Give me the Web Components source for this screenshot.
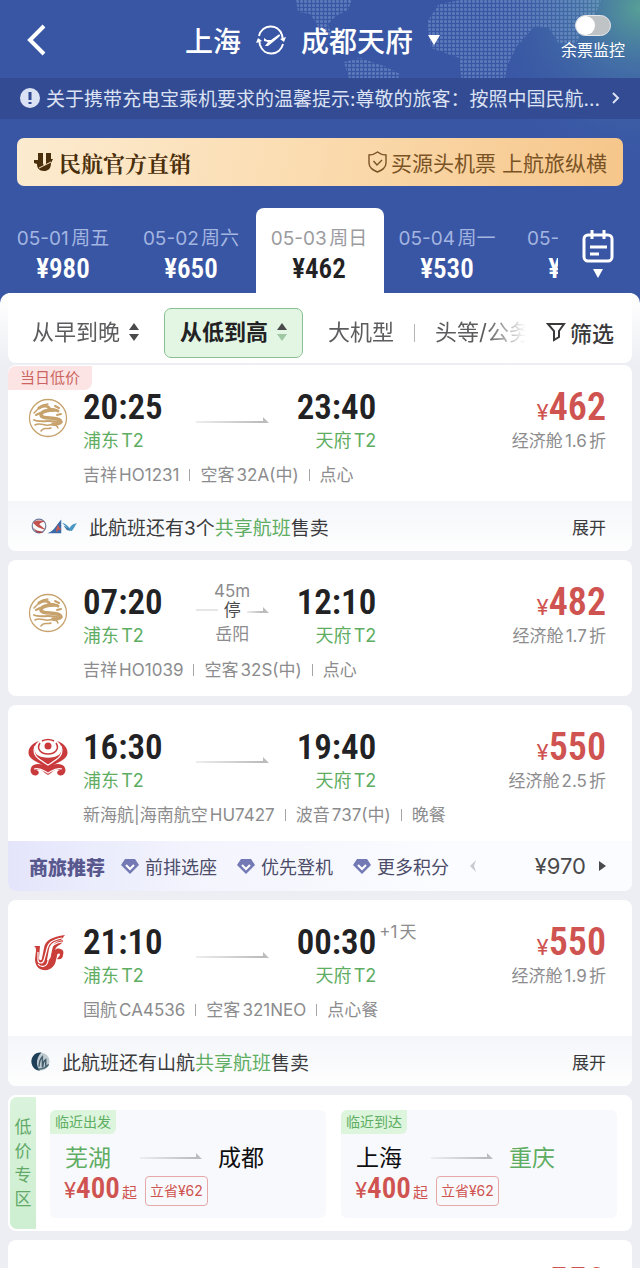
<!DOCTYPE html>
<html lang="zh-CN">
<head>
<meta charset="utf-8">
<meta name="viewport" content="width=device-width, initial-scale=1">
<title>上海 - 成都天府</title>
<style>
  html, body {
    margin: 0;
    height: 100%;
  }
  body {
    --sans: Inter, "Noto Sans CJK SC", sans-serif;
    --digits: "Roboto Condensed", "Liberation Sans Narrow", Roboto, sans-serif;
    --blue: #3956a5;
    --green: #5ead62;
    --red: #cf5350;
    --grey: #8c8c8e;
    --ink: #222224;
    background: #eceef3;
    color: var(--ink);
    font-family: var(--sans);
    text-autospace: normal;
    overflow: hidden;
  }
</style>
</head>
<body>
<flight-app>
  <search-header slot="top" from="上海" to="成都天府"></search-header>
  <notice-bar slot="top">关于携带充电宝乘机要求的温馨提示:尊敬的旅客：按照中国民航...</notice-bar>
  <promo-banner slot="top">民航官方直销<span slot="slogan">买源头机票 上航旅纵横</span></promo-banner>
  <date-tabs slot="top"></date-tabs>

  <filter-bar></filter-bar>

  <flight-card badge="当日低价" airline="juneyao" depart="20:25" arrive="23:40" price="462"
    cabin="经济舱1.6折" info="吉祥HO1231,空客32A(中),点心">
    <share-bar slot="footer">
      <airline-logo slot="icon" name="eastern" size="16"></airline-logo>
      <airline-logo slot="icon" name="southern" size="15"></airline-logo>
      <airline-logo slot="icon" name="xiamen" size="15"></airline-logo>
      此航班还有3个<b>共享航班</b>售卖
    </share-bar>
  </flight-card>

  <flight-card airline="juneyao" depart="07:20" arrive="12:10" price="482" stop="岳阳" wait="45m"
    cabin="经济舱1.7折" info="吉祥HO1039,空客32S(中),点心"></flight-card>

  <flight-card airline="hainan" depart="16:30" arrive="19:40" price="550"
    cabin="经济舱2.5折" info="新海航|海南航空HU7427,波音737(中),晚餐">
    <business-bar slot="footer" price="970"></business-bar>
  </flight-card>

  <flight-card airline="airchina" depart="21:10" arrive="00:30" next-day="+1天" price="550"
    cabin="经济舱1.9折" info="国航CA4536,空客321NEO,点心餐">
    <share-bar slot="footer">
      <airline-logo slot="icon" name="shandong" size="19"></airline-logo>
      此航班还有山航<b>共享航班</b>售卖
    </share-bar>
  </flight-card>

  <low-price-zone>
    <nearby-deal label="临近出发" from="芜湖" to="成都" near="from" price="400" save="62"></nearby-deal>
    <nearby-deal label="临近到达" from="上海" to="重庆" near="to" price="400" save="62"></nearby-deal>
  </low-price-zone>

  <flight-card airline="airchina" depart="20:30" arrive="23:55" price="550"
    cabin="经济舱1.9折" info="国航CA4516,空客321NEO,点心餐"></flight-card>
</flight-app>

<script>
// small helper so every component does not repeat the attach + clone part
class BaseElement extends HTMLElement {
  constructor() {
    super();
    this.attachShadow({ mode: "open" });
  }

  connectedCallback() {
    const template = document.createElement("template");
    template.innerHTML = `
      <style>
        :host, * { box-sizing: border-box; }
        button {
          all: unset;
          box-sizing: border-box;
          cursor: pointer;
        }
        a { color: inherit; text-decoration: none; }
        svg { display: block; flex: none; }
      </style>
      ${this.render()}
    `;
    this.shadowRoot.replaceChildren(template.content.cloneNode(true));
  }

  attr(name) {
    return this.getAttribute(name) || "";
  }
}

class FlightApp extends BaseElement {
  render() {
    return `
      <style>
        :host {
          display: flex;
          flex-direction: column;
          height: 100vh;
        }
        header {
          position: relative;
          flex: none;
          background: var(--blue);
        }
        /* glow and dotted map lie under the whole header */
        .map {
          position: absolute;
          top: 0;
          right: 0;
          z-index: 0;
        }
        .content { position: relative; z-index: 1; }
        .body {
          flex: 1;
          min-height: 0;
          background: var(--blue);
        }
        main {
          display: flex;
          flex-direction: column;
          gap: 9px;
          height: 100%;
          padding: 0 8px;
          overflow: hidden;
          border-radius: 10px 10px 0 0;
          background: linear-gradient(#fff, #fcfcfd 16px, #eceef3 72px);
        }
      </style>
      <header>
        <svg class="map" width="640" height="160" viewBox="0 0 640 160">
          <defs>
            <pattern id="dots" width="4" height="4" patternUnits="userSpaceOnUse">
              <rect width="3" height="3" rx="1" fill="#a9c6ea"/>
            </pattern>
            <radialGradient id="glow" gradientUnits="userSpaceOnUse" cx="640" cy="8" r="170">
              <stop offset="0" stop-color="#57a095"/>
              <stop offset=".35" stop-color="#4a80a6" stop-opacity=".6"/>
              <stop offset="1" stop-color="#3956a5" stop-opacity="0"/>
            </radialGradient>
          </defs>
          <rect width="640" height="160" fill="url(#glow)"/>
          <g fill="url(#dots)" opacity=".3">
            <path d="M296 0h56l-4 10-12 6-8 8 4 12-10-4-12-18-12-2z"/>
            <path d="M344 62l16-4 24 8 16 8-6 14-12 10-28-2-4-14z"/>
            <path d="M427 22l12-18 22-4h140l-8 20-20 26-14-2-10-16-14-2-18 20-10 20-4 26h-40l-4-34-28-10z"/>
            <path d="M594 86l14-6 20 2 4 12h-34z"/>
          </g>
        </svg>
        <div class="content"><slot name="top"></slot></div>
      </header>
      <div class="body"><main><slot></slot></main></div>
    `;
  }
}

class SearchHeader extends BaseElement {
  render() {
    return `
      <style>
        :host {
          display: grid;
          grid-template-columns: 1fr auto 1fr;
          height: 78px;
          padding: 0 15px 0 0;
          color: #fff;
        }
        .back { padding: 22px 24px; justify-self: start; }
        .route {
          display: flex;
          align-items: center;
          gap: 15px;
          height: 80px;
          font-size: 28px;
          font-weight: 500;
        }
        label {
          display: flex;
          flex-direction: column;
          align-items: center;
          justify-self: end;
          gap: 2px;
          padding-top: 15px;
          font-size: 16px;
          line-height: 24px;
        }
        input {
          appearance: none;
          display: flex;
          width: 36px;
          height: 21px;
          margin: 0;
          border: 1px solid #e6e8ea;
          border-radius: 11px;
          background: #bfc3c6;
        }
        input::before {
          content: "";
          width: 19px;
          height: 19px;
          border-radius: 50%;
          background: #fff;
        }
      </style>
      <button class="back" aria-label="返回">
        <svg width="24" height="34" viewBox="0 0 24 34" fill="none" stroke="#fff" stroke-width="4">
          <path d="M20 3L6 17l14 14"/>
        </svg>
      </button>
      <button class="route">
        <span>${this.attr("from")}</span>
        <svg width="30" height="30" viewBox="0 0 30 30" fill="none" stroke="#fff" stroke-width="2">
          <path d="M3 11C6 -1 22 -2 26 10l1 5M27 19C24 31 8 32 4 20l-1-5"/>
          <path d="M24 14l4 3 2-5zM6 16l-4-3-2 5z" fill="#fff" stroke="none"/>
          <path d="M8 13l3 2 4 0 7-5c2-1 3 0 1 2l-6 5-5 4-3 0 3-4-4-1z" fill="#fff" stroke="none"/>
        </svg>
        <span>${this.attr("to")}</span>
        <svg width="12" height="10" viewBox="0 0 12 10"><path d="M0 0h12L6 10z" fill="#fff"/></svg>
      </button>
      <label><input type="checkbox" role="switch">余票监控</label>
    `;
  }
}

class NoticeBar extends BaseElement {
  render() {
    return `
      <style>
        :host { display: block; background: #334b92; color: #dbe2f3; }
        a {
          display: flex;
          align-items: center;
          gap: 6px;
          height: 41px;
          padding: 0 20px 2px;
          font-size: 19px;
          text-autospace: no-autospace;
        }
        span {
          flex: 1;
          min-width: 0;
          white-space: nowrap;
        }
      </style>
      <a href="#notice">
        <svg width="20" height="20" viewBox="0 0 20 20">
          <circle cx="10" cy="10" r="10" fill="#dbe2f3"/>
          <path d="M10 4v8M10 14v2" stroke="#334b92" stroke-width="3"/>
        </svg>
        <span><slot></slot></span>
        <svg width="9" height="12" viewBox="0 0 9 12" fill="none" stroke="#dbe2f3" stroke-width="2">
          <path d="M2 1l5 5-5 5"/>
        </svg>
      </a>
    `;
  }
}

class PromoBanner extends BaseElement {
  render() {
    return `
      <style>
        :host { display: block; padding: 19px 17px 22px; }
        a {
          display: flex;
          align-items: center;
          justify-content: space-between;
          height: 48px;
          padding: 0 16px 0 17px;
          border-radius: 7px;
          background: linear-gradient(100deg, #fcebd0, #fbddb2 45%, #f6c68a);
          color: #4a2f0c;
          white-space: nowrap;
        }
        strong, .slogan { display: flex; align-items: center; gap: 5px; }
        strong {
          font-family: "Noto Serif CJK SC", "Noto Sans CJK SC", serif;
          font-size: 22px;
          font-weight: 700;
        }
        .slogan { gap: 4px; font-size: 21px; color: #7a5325; }
      </style>
      <a href="#direct">
        <strong>
          <svg width="20" height="20" viewBox="0 0 20 20" fill="#4a2f0c">
            <path d="M4 1h5v10c0 3 3 3 3 0V1h5v6h2l-2 4c0 6-3 8-7 8-5 0-7-3-7-7l-3-1V8h4z"/>
            <path d="M5 16l12-6" stroke="#fbe5c4" stroke-width="1"/>
          </svg>
          <slot></slot>
        </strong>
        <span class="slogan">
          <svg width="19" height="22" viewBox="0 0 19 22" fill="none" stroke="#7a5325" stroke-width="1.4">
            <path d="M9.5 1C12 3 15 4 18 4v8c0 5-4 7-8.500 9C5 19 1 17 1 12V4c3 0 6-1 8.500-3z"/>
            <path d="M5.500 10l3.500 4 5-5"/>
          </svg>
          <slot name="slogan"></slot>
        </span>
      </a>
    `;
  }
}

class DateTabs extends BaseElement {
  render() {
    const days = [
      ["05-01周五", 980],
      ["05-02周六", 650],
      ["05-03周日", 462],
      ["05-04周一", 530],
      ["05-05周二", 560],
    ];
    return `
      <style>
        :host { display: flex; height: 85px; padding-right: 26px; }
        .tabs { display: flex; flex: 1; min-width: 0; overflow: hidden; }
        .tabs button {
          flex: none;
          width: 128px;
          padding: 8px 2px 0 0;
          border-radius: 8px 8px 0 0;
          color: #a3b5e0;
          font-size: 19px;
          line-height: 28px;
          text-align: center;
          white-space: nowrap;
        }
        .day, strong { display: block; }
        .day { height: 28px; }
        strong {
          color: #fff;
          font-family: var(--digits);
          font-size: 27px;
          font-weight: 600;
          line-height: 32px;
        }
        .tabs button[aria-selected=true] { background: #fff; color: #9b9b9f; }
        [aria-selected=true] strong { color: var(--ink); }
        .calendar {
          display: flex;
          flex-direction: column;
          align-items: center;
          gap: 6px;
          margin-left: 24px;
          padding-top: 21px;
        }
      </style>
      <div class="tabs" role="tablist">
        ${days.map(([day, price], i) => `
          <button role="tab" aria-selected="${i === 2}"><span class="day">${day}</span><strong>¥${price}</strong></button>
        `).join("")}
      </div>
      <button class="calendar" aria-label="日历">
        <svg width="32" height="34" viewBox="0 0 32 34" fill="none" stroke="#fff" stroke-width="3">
          <rect x="2" y="6" width="28" height="26" rx="4"/>
          <path d="M10 1v9M22 1v9M8 18h17M8 25h9"/>
        </svg>
        <svg width="10" height="9" viewBox="0 0 10 9"><path d="M0 0h10L5 9z" fill="#fff"/></svg>
      </button>
    `;
  }
}

class FilterBar extends BaseElement {
  sortIcon(down) {
    return `
      <svg width="10" height="18" viewBox="0 0 10 18">
        <path d="M0 7h10L5 0z" fill="#4a4a4c"/>
        <path d="M0 11h10l-5 7z" fill="${down}"/>
      </svg>
    `;
  }

  render() {
    return `
      <style>
        :host {
          display: flex;
          flex: none;
          align-items: center;
          height: 70px;
          margin-bottom: -7px;
          padding: 10px 18px 0 0;
          border-radius: 0 0 8px 8px;
          background: #fff;
          font-size: 22px;
          color: #5c5c5e;
        }
        .options {
          display: flex;
          flex: 1;
          align-items: center;
          gap: 20px;
          min-width: 0;
          padding-left: 24px;
          overflow: hidden;
          white-space: nowrap;
          mask-image: linear-gradient(90deg, #000 calc(100% - 40px), transparent);
        }
        .options button {
          display: flex;
          flex: none;
          align-items: center;
          gap: 9px;
          line-height: 30px;
          padding-bottom: 2px;
        }
        .options .active {
          height: 50px;
          margin: 0 5px;
          padding: 0 15px 2px;
          border: 1px solid #8cbf92;
          border-radius: 7px;
          background: #e2f6e3;
          color: var(--ink);
          font-weight: 700;
        }
        i { flex: none; width: 1px; height: 18px; background: #b5b5b8; }
        .filter {
          display: flex;
          align-items: center;
          gap: 4px;
          padding: 0 0 2px 20px;
          color: #39393b;
          font-weight: 500;
        }
      </style>
      <div class="options">
        <button>从早到晚 ${this.sortIcon("#4a4a4c")}</button>
        <button class="active">从低到高 ${this.sortIcon("#9fc7a2")}</button>
        <button>大机型</button>
        <i></i>
        <button>头等/公务</button>
      </div>
      <button class="filter">
        <svg width="20" height="20" viewBox="0 0 20 20" fill="none" stroke="#39393b" stroke-width="2">
          <path d="M2 2h16l-5 7v6l-5 3V9z"/>
        </svg>
        筛选
      </button>
    `;
  }
}

const LOGOS = {
  juneyao: `
    <g fill="none" stroke="#c7a26c" stroke-linecap="round">
      <circle cx="20" cy="20" r="18.500" stroke-width="1.300"/>
      <path stroke-width="3" d="M11 10c4-3 9-2 10 0 2 3 7 1 9 3"/>
      <path stroke-width="3.500" d="M26 12c-5 0-13 1-13 5 0 5 19 1 20 7-1 2-5 2-8 2"/>
      <path stroke-width="2" d="M6 22c5 3 19-1 26 3M8 17l4-2M27 8l4 2M29 17l4-1"/>
      <path stroke-width="1.500" d="M7 27c5-3 9 1 14 0s8 0 9 3M13 33c3-5 6-1 10-3M6 15l4-4M20 6l-5 1"/>
    </g>`,
  hainan: `
    <g fill="#c93a3d">
      <path d="M11 3C1 6-3 16 4 21c5 4 11 5 16 10 5-5 11-6 16-10C43 16 39 6 29 3c7 5 6 14-3 16-4 1-8 1-12 0C5 17 4 8 11 3z"/>
      <path d="M20 29c-4-3-15-5-17 1-2 5 3 9 6 7 3-1 2-5-1-5 5-2 7 2 12 5 5-3 7-7 12-5-3 0-4 4-1 5 3 2 8-2 6-7-2-6-13-4-17-1z"/>
      <circle cx="20" cy="8" r="3.500"/>
    </g>
    <g fill="none" stroke="#fff" stroke-width="1.200">
      <path d="M7 8c-4 10 5 14 13 19 8-5 17-9 13-19"/>
      <path d="M6 31c6-2 10 2 14 4 4-2 8-6 14-4"/>
    </g>
    <g fill="none" stroke="#c93a3d" stroke-width="1.500">
      <path d="M12 5c-4 6 1 11 8 11s12-5 8-11"/>
      <path d="M14 3c4-2 8-2 12 0"/>
    </g>`,
  airchina: `
    <path fill="#cb3f3b" d="M37 2C24 4 17 7 16 15l-2 10c0 3-3 3-3 0l1-12H6c2 1 2 3 2 5l-1 8c0 6 3 10 8 11 8 1 12-4 13-10l1-4c0-3 3-3 3-1l-3 4c4 1 6-1 6-4 1-3 0-6-3-6-2-1-4 0-5 1 2-6 7-4 8-10-6 1-9 3-10 6l-2 9c0 4-3 6-4 5l2-11c1-5 5-8 12-9z"/>
    <g fill="none" stroke="#fff" stroke-width="1.200">
      <path d="M34 5C24 7 20 10 19 16l-3 11c-1 4-6 4-6 0v-8"/>
      <path d="M34 9c-8 1-11 4-12 9l-2 10c-1 6-7 7-10 3"/>
    </g>`,
  eastern: `
    <circle cx="20" cy="20" r="17" fill="none" stroke="#6d7a9c" stroke-width="3"/>
    <path d="M5 11c9-7 20-5 30-3-8 3-13 5-14 8l15 13c-13-4-21-5-31-18z" fill="#c2524e"/>
    <path d="M6 23c5 10 15 9 26 12-10 6-22 2-26-12z" fill="#a9444b"/>`,
  southern: `
    <path d="M1 38C19 31 24 17 38 1v37z" fill="#3b6ba8"/>
    <path d="M29 14l4 9 6 4-9 2-6 7 1-10z" fill="#cc5850"/>`,
  xiamen: `
    <path d="M0 10c9 2 15 8 20 14C25 15 31 12 40 11c-6 5-7 14-14 21-9-1-12-10-26-22z" fill="#4a97c4"/>
    <path d="M4 18c6 3 13 6 18 14l-9-3z" fill="#386e9d"/>`,
  shandong: `
    <circle cx="20" cy="20" r="19" fill="#bfcbd0"/>
    <path d="M22 1C7 0 0 11 1 22c1 9 8 17 18 17C9 28 11 12 22 1z" fill="#1d3f57"/>
    <path d="M17 31c0-9 1-15 7-21v22M25 31c0-7 2-12 6-15v14M14 36c9 0 18-2 23-10" fill="none" stroke="#44606f" stroke-width="3"/>`,
};

class AirlineLogo extends BaseElement {
  render() {
    const size = this.attr("size") || 40;
    return `
      <style>:host { display: block; flex: none; }</style>
      <svg width="${size}" height="${size}" viewBox="0 0 40 40" aria-hidden="true">${LOGOS[this.attr("name")]}</svg>
    `;
  }
}

// thin line with half an arrow head, as long as its box
class RouteArrow extends BaseElement {
  render() {
    return `
      <style>
        :host { display: flex; align-items: flex-end; }
        i { flex: 1; height: 2px; background: linear-gradient(90deg, #eeeef0, #bcbcbf); }
      </style>
      <i></i>
      <svg width="8" height="6" viewBox="0 0 8 6"><path d="M0 6V4h2V0l6 6z" fill="#bcbcbf"/></svg>
    `;
  }
}

class FlightCard extends BaseElement {
  renderMiddle() {
    if (!this.attr("stop")) {
      return `<div class="middle"><route-arrow></route-arrow></div>`;
    }
    return `
      <div class="middle stop">
        <span>${this.attr("wait")}</span>
        <div class="line"><i></i><em>停</em><route-arrow></route-arrow></div>
        <span>${this.attr("stop")}</span>
      </div>
    `;
  }

  render() {
    const badge = this.attr("badge");
    const info = this.attr("info").split(",");
    return `
      <style>
        :host {
          display: block;
          position: relative;
          flex: none;
          overflow: hidden;
          border-radius: 8px;
          background: #fff;
        }
        .badge {
          position: absolute;
          top: 1px;
          left: 0;
          padding: 0 12px;
          border-radius: 8px 0 8px 0;
          background: #fce4e4;
          color: #cb6461;
          font-size: 15px;
          line-height: 24px;
        }
        .main {
          display: grid;
          grid-template-columns: 55px 1fr auto;
          height: 136px;
          padding: 24px 26px 12px 20px;
          white-space: nowrap;
        }
        airline-logo { padding-top: 9px; }
        .route { display: flex; }
        .arrive { text-align: right; }
        time {
          display: block;
          min-width: 77px;
          font-family: var(--digits);
          font-size: 35px;
          font-weight: 600;
          line-height: 38px;
        }
        .terminal {
          color: var(--green);
          font-size: 18px;
          line-height: 28px;
        }
        .middle { width: 73px; margin: 0 28px 0 33px; padding-top: 28px; }
        .stop {
          margin-top: -3px;
          padding-top: 0;
          color: var(--grey);
          font-size: 17px;
          line-height: 20px;
          text-align: center;
        }
        .stop span:last-child { line-height: 30px; }
        .line { display: flex; align-items: center; gap: 6px; height: 18px; }
        .line i { flex: 1; height: 2px; background: #e6e6e8; }
        .line route-arrow { flex: 1; }
        em { color: #4c4c4e; font-style: normal; }
        sup { margin-left: 3px; color: var(--grey); font-size: 17px; line-height: 16px; vertical-align: top; }
        .price { text-align: right; }
        .amount {
          height: 36px;
          color: var(--red);
          font-size: 22px;
          line-height: 36px;
        }
        .amount strong { font-family: var(--digits); font-size: 38px; font-weight: 600; line-height: 36px; }
        .cabin { color: var(--grey); font-size: 17px; line-height: 32px; }
        .info {
          display: flex;
          grid-column: 2 / -1;
          align-items: center;
          height: 28px;
          margin-top: 4px;
          color: var(--grey);
          font-size: 17px;
          line-height: 28px;
        }
        .info span + span::before {
          content: "";
          display: inline-block;
          width: 1px;
          height: 12px;
          margin: 0 10px;
          background: #a5a5a8;
        }
      </style>
      ${badge ? `<span class="badge">${badge}</span>` : ""}
      <div class="main">
        <airline-logo name="${this.attr("airline")}"></airline-logo>
        <div class="route">
          <div>
            <time>${this.attr("depart")}</time>
            <div class="terminal">浦东T2</div>
          </div>
          ${this.renderMiddle()}
          <div class="arrive">
            <time>${this.attr("arrive")}</time>
            <div class="terminal">天府T2</div>
          </div>
          <sup>${this.attr("next-day")}</sup>
        </div>
        <div class="price">
          <div class="amount">¥<strong>${this.attr("price")}</strong></div>
          <div class="cabin">${this.attr("cabin")}</div>
        </div>
        <div class="info">${info.map((item) => `<span>${item}</span>`).join("")}</div>
      </div>
      <slot name="footer"></slot>
    `;
  }
}

class ShareBar extends BaseElement {
  render() {
    return `
      <style>
        :host {
          display: flex;
          align-items: center;
          gap: 12px;
          height: 50px;
          padding: 0 26px 0 23px;
          background: linear-gradient(#f4f6fa, #fefefe);
          color: #3a3a3c;
          font-size: 19px;
          text-autospace: no-autospace;
          white-space: nowrap;
        }
        .icons { display: flex; align-items: center; }
        p { flex: 1; margin: 0; }
        ::slotted(b) { color: var(--green); font-weight: 400; }
        button { font-size: 17px; }
      </style>
      <div class="icons"><slot name="icon"></slot></div>
      <p><slot></slot></p>
      <button>展开</button>
    `;
  }
}

class BusinessBar extends BaseElement {
  render() {
    const perks = ["前排选座", "优先登机", "更多积分"];
    return `
      <style>
        :host {
          display: flex;
          align-items: center;
          height: 50px;
          padding: 0 26px 0 21px;
          background: linear-gradient(90deg, #e4e5fb, #f3f4fd 30%, #fbfcff 70%);
          color: #4c4c6a;
          font-size: 18px;
          white-space: nowrap;
        }
        strong { margin-right: 16px; color: #58588f; font-size: 19px; font-weight: 900; }
        ul { display: flex; flex: 1; gap: 20px; margin: 0; padding: 0; list-style: none; }
        li { display: flex; align-items: center; gap: 6px; }
        .price { display: flex; align-items: center; gap: 12px; color: #4a4a4c; font-size: 22px; }
      </style>
      <strong>商旅推荐</strong>
      <ul>
        ${perks.map((perk) => `
          <li>
            <svg width="18" height="15" viewBox="0 0 18 15">
              <path d="M4 0h10l4 6-9 9-9-9z" fill="#7379b4"/>
              <path d="M5 6l4 4 4-4" fill="none" stroke="#fff" stroke-width="2"/>
            </svg>
            ${perk}
          </li>
        `).join("")}
        <li>
          <svg width="8" height="12" viewBox="0 0 8 12"><path d="M7 0L1 6l6 6-2-6z" fill="#c9c9d0"/></svg>
        </li>
      </ul>
      <button class="price">
        ¥${this.attr("price")}
        <svg width="8" height="10" viewBox="0 0 8 10"><path d="M1 0v10l7-5z" fill="#4a4a4c"/></svg>
      </button>
    `;
  }
}

class LowPriceZone extends BaseElement {
  render() {
    return `
      <style>
        :host {
          display: flex;
          flex: none;
          height: 136px;
          padding: 2px;
          border-radius: 8px;
          background: #fff;
        }
        h2 {
          display: flex;
          align-items: center;
          justify-content: center;
          width: 26px;
          margin: 0;
          border-radius: 7px 0 0 7px;
          background: linear-gradient(#daf3dc, #cdeed0);
          color: #62a968;
          font-size: 17px;
          font-weight: 400;
          line-height: 24px;
          text-align: center;
        }
        h2 span { width: 17px; }
        .deals {
          display: grid;
          flex: 1;
          grid-template-columns: 1fr 1fr;
          gap: 15px;
          padding: 13px 13px 11px 14px;
        }
      </style>
      <h2><span>低价专区</span></h2>
      <div class="deals"><slot></slot></div>
    `;
  }
}

class NearbyDeal extends BaseElement {
  render() {
    return `
      <style>
        :host {
          display: block;
          border-radius: 6px;
          background: #f8f9fc;
          white-space: nowrap;
        }
        .label {
          display: block;
          width: max-content;
          padding: 0 5px;
          border-radius: 6px 0 6px 0;
          background: #dcf5dc;
          color: var(--green);
          font-size: 14px;
          line-height: 24px;
        }
        .cities {
          display: flex;
          align-items: center;
          height: 44px;
          padding-left: 15px;
          color: #0f0f10;
          font-size: 23px;
        }
        route-arrow { width: 62px; margin: 0 16px 0 29px; }
        .near { color: var(--green); }
        .price {
          display: flex;
          align-items: center;
          height: 25px;
          padding-left: 14px;
          color: var(--red);
          font-size: 15px;
          text-autospace: no-autospace;
        }
        .amount { font-size: 22px; line-height: 25px; }
        .amount strong { font-family: var(--digits); font-size: 29px; font-weight: 600; line-height: 25px; }
        .amount small { margin-left: 2px; font-size: 15px; }
        .save {
          margin-left: 8px;
          padding: 0 4px;
          border: 1px solid #e5a9a8;
          border-radius: 4px;
          font-size: 14px;
          line-height: 28px;
        }
      </style>
      <span class="label">${this.attr("label")}</span>
      <div class="cities">
        <span class="${this.attr("near") === "from" ? "near" : ""}">${this.attr("from")}</span>
        <route-arrow></route-arrow>
        <span class="${this.attr("near") === "to" ? "near" : ""}">${this.attr("to")}</span>
      </div>
      <div class="price">
        <span class="amount">¥<strong>${this.attr("price")}</strong><small>起</small></span>
        <span class="save">立省¥${this.attr("save")}</span>
      </div>
    `;
  }
}

customElements.define("flight-app", FlightApp);
customElements.define("search-header", SearchHeader);
customElements.define("notice-bar", NoticeBar);
customElements.define("promo-banner", PromoBanner);
customElements.define("date-tabs", DateTabs);
customElements.define("filter-bar", FilterBar);
customElements.define("airline-logo", AirlineLogo);
customElements.define("route-arrow", RouteArrow);
customElements.define("flight-card", FlightCard);
customElements.define("share-bar", ShareBar);
customElements.define("business-bar", BusinessBar);
customElements.define("low-price-zone", LowPriceZone);
customElements.define("nearby-deal", NearbyDeal);
</script>
</body>
</html>
